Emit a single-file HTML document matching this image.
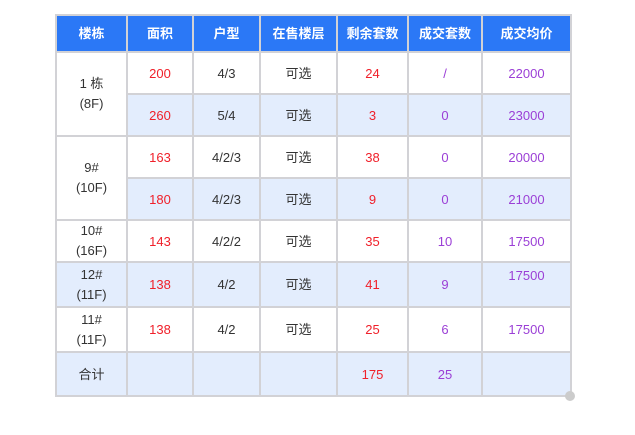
<!DOCTYPE html>
<html><head><meta charset="utf-8"><style>
body{margin:0;background:#fff;width:635px;height:435px;position:relative;font-family:"Liberation Sans","Noto Sans CJK SC",sans-serif;}
table{position:absolute;left:55px;top:14px;border-collapse:collapse;table-layout:fixed;width:516px;}
td,th{border:2px solid #d2d2d6;text-align:center;font-size:13px;padding:0;line-height:17px;}
th{background:#2b78f6;color:#fff;font-weight:bold;height:35px;border-color:#d2d2d6;}
td{color:#333;}
td.f{line-height:20px;}
.l td{background:#e3edfd;}
td.w{background:#fff!important;}
.r{color:#f0202a;}.p{color:#9b3fd6;}
.dot{position:absolute;left:565px;top:391px;width:10px;height:10px;border-radius:50%;background:#ccc;}
</style></head><body>
<table>
<colgroup><col style="width:71px"><col style="width:66px"><col style="width:67px"><col style="width:77px"><col style="width:71px"><col style="width:74px"><col style="width:89px"></colgroup>
<tr><th>楼栋</th><th>面积</th><th>户型</th><th>在售楼层</th><th>剩余套数</th><th>成交套数</th><th>成交均价</th></tr>
<tr style="height:42px"><td rowspan="2" class="w f">1 栋<br>(8F)</td><td class="r">200</td><td>4/3</td><td>可选</td><td class="r">24</td><td class="p">/</td><td class="p">22000</td></tr>
<tr class="l" style="height:42px"><td class="r">260</td><td>5/4</td><td>可选</td><td class="r">3</td><td class="p">0</td><td class="p">23000</td></tr>
<tr style="height:42px"><td rowspan="2" class="w f">9#<br>(10F)</td><td class="r">163</td><td>4/2/3</td><td>可选</td><td class="r">38</td><td class="p">0</td><td class="p">20000</td></tr>
<tr class="l" style="height:42px"><td class="r">180</td><td>4/2/3</td><td>可选</td><td class="r">9</td><td class="p">0</td><td class="p">21000</td></tr>
<tr style="height:42px"><td class="f">10#<br>(16F)</td><td class="r">143</td><td>4/2/2</td><td>可选</td><td class="r">35</td><td class="p">10</td><td class="p">17500</td></tr>
<tr class="l" style="height:45px"><td class="f">12#<br>(11F)</td><td class="r">138</td><td>4/2</td><td>可选</td><td class="r">41</td><td class="p">9</td><td class="p" style="vertical-align:top;padding-top:4px">17500</td></tr>
<tr style="height:45px"><td class="f">11#<br>(11F)</td><td class="r">138</td><td>4/2</td><td>可选</td><td class="r">25</td><td class="p">6</td><td class="p">17500</td></tr>
<tr class="l" style="height:44px"><td>合计</td><td></td><td></td><td></td><td class="r">175</td><td class="p">25</td><td></td></tr>
</table>
<div class="dot"></div>
</body></html>
